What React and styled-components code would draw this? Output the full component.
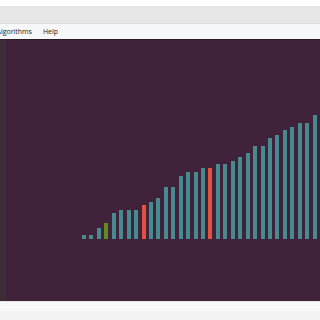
import React from 'react';
import styled, { createGlobalStyle } from 'styled-components';

const GlobalStyle = createGlobalStyle`
  html, body {
    margin: 0;
    padding: 0;
    background: #ffffff;
    overflow: hidden;
  }
`;

const Window = styled.div`
  width: 320px;
  height: 320px;
  display: flex;
  flex-direction: column;
  overflow: hidden;
  font-family: "Open Sans", "Noto Sans", sans-serif;
`;

const TitleStrip = styled.div`
  height: 6px;
  background: #ffffff;
`;

const ToolStrip = styled.div`
  height: 17px;
  background: #e6e6e6;
  border-bottom: 1px solid #dcdcdc;
`;

const MenuBar = styled.div`
  height: 15px;
  background: #f6f7f8;
  border-bottom: 1px solid #2b1b27;
  display: flex;
  align-items: center;
  gap: 11px;
  margin-left: -3.5px;
`;

const MenuItem = styled.span`
  font-size: 7px;
  color: #1a1a1a;
  line-height: 1;
`;

const Body = styled.div`
  flex: 1;
  display: flex;
  min-height: 0;
`;

const Frame = styled.div`
  width: 6px;
  background: #3b2c36;
`;

const Plot = styled.div`
  flex: 1;
  background: #40233a;
  display: flex;
  align-items: flex-end;
  gap: 3.45px;
  padding: 0 0 62px 76px;
  overflow: hidden;
`;

const Bar = styled.div`
  flex: 0 0 4px;
  height: ${({ h }) => h}px;
  background: ${({ kind }) =>
    kind === 'red' ? '#e2523f' : kind === 'green' ? '#5f8b21' : '#478b91'};
`;

const StatusBar = styled.div`
  height: 18px;
  background: #f3f3f3;
  border-top: 1px solid #e4e4e4;
  box-shadow: inset 0 9px 0 #f8f8f8;
`;

const heights = [4, 4, 11, 16, 26, 29, 29, 29, 34, 37, 41, 52, 52, 63, 67, 67, 71, 71, 75, 75, 78, 82, 86, 93, 93, 101, 104, 109, 112, 116, 116, 124, 128];
const kinds = { 3: 'green', 8: 'red', 17: 'red' };

export default function App() {
  return (
    <Window>
      <GlobalStyle />
      <TitleStrip />
      <ToolStrip />
      <MenuBar>
        <MenuItem>Algorithms</MenuItem>
        <MenuItem>Help</MenuItem>
      </MenuBar>
      <Body>
        <Frame />
        <Plot>
          {heights.map((h, i) => (
            <Bar key={i} h={h} kind={kinds[i]} />
          ))}
        </Plot>
      </Body>
      <StatusBar />
    </Window>
  );
}
